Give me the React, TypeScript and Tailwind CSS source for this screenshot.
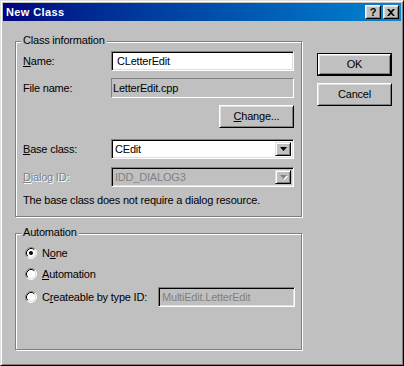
import React from "react";

const sunkenDeep =
  "border border-t-[#808080] border-l-[#808080] border-r-white border-b-white shadow-[inset_1px_1px_0_#000,inset_-1px_-1px_0_#dfdfdf]";
const sunkenThin =
  "border border-t-[#808080] border-l-[#808080] border-r-white border-b-white";
const raised =
  "border border-t-white border-l-white border-r-black border-b-black shadow-[inset_1px_1px_0_#dfdfdf,inset_-1px_-1px_0_#808080]";
const raisedInner =
  "border border-t-[#dfdfdf] border-l-[#dfdfdf] border-r-black border-b-black shadow-[inset_1px_1px_0_#fff,inset_-1px_-1px_0_#808080]";

function U({ children }: { children: React.ReactNode }) {
  return <span className="underline underline-offset-[1px]">{children}</span>;
}

function Arrow({ disabled }: { disabled?: boolean }) {
  return (
    <div className={`w-[16px] h-full bg-[#c0c0c0] flex items-center justify-center ${raisedInner}`}>
      <svg width="9" height="6" viewBox="0 0 9 6">
        {disabled && <path d="M2 2h7l-3.5 4z" fill="#fff" />}
        <path d="M1 1h7l-3.5 4z" fill={disabled ? "#808080" : "#000"} />
      </svg>
    </div>
  );
}

function Radio({ checked }: { checked?: boolean }) {
  return (
    <svg width="12" height="12" viewBox="0 0 12 12" className="shrink-0">
      <circle cx="6" cy="6" r="5" fill="#fff" />
      <path d="M2.11 9.89A5.5 5.5 0 0 1 9.89 2.11" stroke="#808080" fill="none" />
      <path d="M9.89 2.11A5.5 5.5 0 0 1 2.11 9.89" stroke="#fff" fill="none" />
      <path d="M2.82 9.18A4.5 4.5 0 0 1 9.18 2.82" stroke="#000" fill="none" />
      <path d="M9.18 2.82A4.5 4.5 0 0 1 2.82 9.18" stroke="#dfdfdf" fill="none" />
      {checked && <circle cx="6" cy="6" r="2" fill="#000" />}
    </svg>
  );
}

function Group({
  label,
  height,
  children,
}: {
  label: string;
  height: string;
  children: React.ReactNode;
}) {
  return (
    <div
      className={`relative w-[287px] ${height} border border-[#808080] shadow-[inset_1px_1px_0_#fff,1px_1px_0_#fff] pl-[7px] flex flex-col`}
    >
      <span className="absolute left-[5px] top-[-8px] px-[2px] bg-[#c0c0c0] leading-[13px]">
        {label}
      </span>
      {children}
    </div>
  );
}

export default function App() {
  return (
    <div className="w-[404px] h-[366px] bg-[#c0c0c0] border border-t-[#dfdfdf] border-l-[#dfdfdf] border-r-black border-b-black shadow-[inset_1px_1px_0_#fff,inset_-1px_-1px_0_#808080] p-[2px] flex flex-col font-['Liberation_Sans',Arial,sans-serif] text-[11px] leading-[13px] text-black select-none">
      {/* Title bar */}
      <div className="h-[18px] shrink-0 flex items-center bg-linear-to-r from-[#000080] to-[#1084d0] pl-[3px] pr-[2px]">
        <span className="text-white font-bold text-[11px] tracking-[0.4px] flex-1">New Class</span>
        <div className="flex gap-[2px]">
          <div className={`w-[16px] h-[14px] bg-[#c0c0c0] flex items-center justify-center font-bold text-[11px] leading-none ${raised}`}>
            ?
          </div>
          <div className={`w-[16px] h-[14px] bg-[#c0c0c0] flex items-center justify-center ${raised}`}>
            <svg width="8" height="7" viewBox="0 0 8 7">
              <path d="M0 0h2l2 2 2-2h2L5 3.5 8 7H6L4 5 2 7H0l3-3.5z" fill="#000" />
            </svg>
          </div>
        </div>
      </div>

      {/* Body */}
      <div className="flex pl-[12px] pt-[20px] tracking-[-0.2px]">
        <div className="flex flex-col gap-[16px]">
          <Group label="Class information" height="h-[176px]">
            <div className="flex items-center h-[20px] mt-[9px]">
              <div className="w-[88px]">
                <U>N</U>ame:
              </div>
              <div className={`w-[183px] h-[20px] bg-white pl-[5px] flex items-center ${sunkenDeep}`}>
                CLetterEdit
              </div>
            </div>
            <div className="flex items-center h-[20px] mt-[7px]">
              <div className="w-[88px]">File name:</div>
              <div className={`w-[183px] h-[20px] pl-[1px] flex items-center ${sunkenThin}`}>
                LetterEdit.cpp
              </div>
            </div>
            <div className="flex justify-end w-[271px] mt-[7px]">
              <div className={`w-[75px] h-[23px] flex items-center justify-center ${raised}`}>
                <span>
                  <U>C</U>hange...
                </span>
              </div>
            </div>
            <div className="flex items-center h-[20px] mt-[11px]">
              <div className="w-[88px]">
                <U>B</U>ase class:
              </div>
              <div className={`w-[183px] h-[20px] bg-white flex items-stretch p-[2px] ${sunkenThin} shadow-[inset_1px_1px_0_#000,inset_-1px_-1px_0_#dfdfdf]`}>
                <div className="flex-1 flex items-center pl-[1px]">CEdit</div>
                <Arrow />
              </div>
            </div>
            <div className="flex items-center h-[20px] mt-[8px]">
              <div className="w-[88px] text-[#808080] [text-shadow:1px_1px_0_#fff]">
                <U>D</U>ialog ID:
              </div>
              <div className={`w-[183px] h-[20px] bg-[#c0c0c0] flex items-stretch p-[2px] ${sunkenThin} shadow-[inset_1px_1px_0_#000,inset_-1px_-1px_0_#dfdfdf]`}>
                <div className="flex-1 flex items-center pl-[1px] text-[#808080]">IDD_DIALOG3</div>
                <Arrow disabled />
              </div>
            </div>
            <div className="mt-[7px]">The base class does not require a dialog resource.</div>
          </Group>

          <Group label="Automation" height="h-[117px]">
            <div className="flex items-center h-[20px] mt-[9px] pl-[2px] gap-[5px]">
              <Radio checked />
              <span>
                N<U>o</U>ne
              </span>
            </div>
            <div className="flex items-center h-[20px] mt-[1px] pl-[2px] gap-[5px]">
              <Radio />
              <span>
                <U>A</U>utomation
              </span>
            </div>
            <div className="flex items-center h-[20px] mt-[3px]">
              <div className="w-[135px] flex items-center pl-[2px] gap-[5px]">
                <Radio />
                <span>
                  C<U>r</U>eateable by type ID:
                </span>
              </div>
              <div className={`w-[137px] h-[20px] pl-[3px] flex items-center text-[#808080] ${sunkenDeep}`}>
                MultiEdit.LetterEdit
              </div>
            </div>
          </Group>
        </div>

        <div className="ml-[15px] pt-[12px] flex flex-col gap-[7px]">
          <div className="w-[75px] h-[23px] border border-black">
            <div className={`w-full h-full flex items-center justify-center ${raised}`}>OK</div>
          </div>
          <div className={`w-[75px] h-[23px] flex items-center justify-center ${raised}`}>Cancel</div>
        </div>
      </div>
    </div>
  );
}
